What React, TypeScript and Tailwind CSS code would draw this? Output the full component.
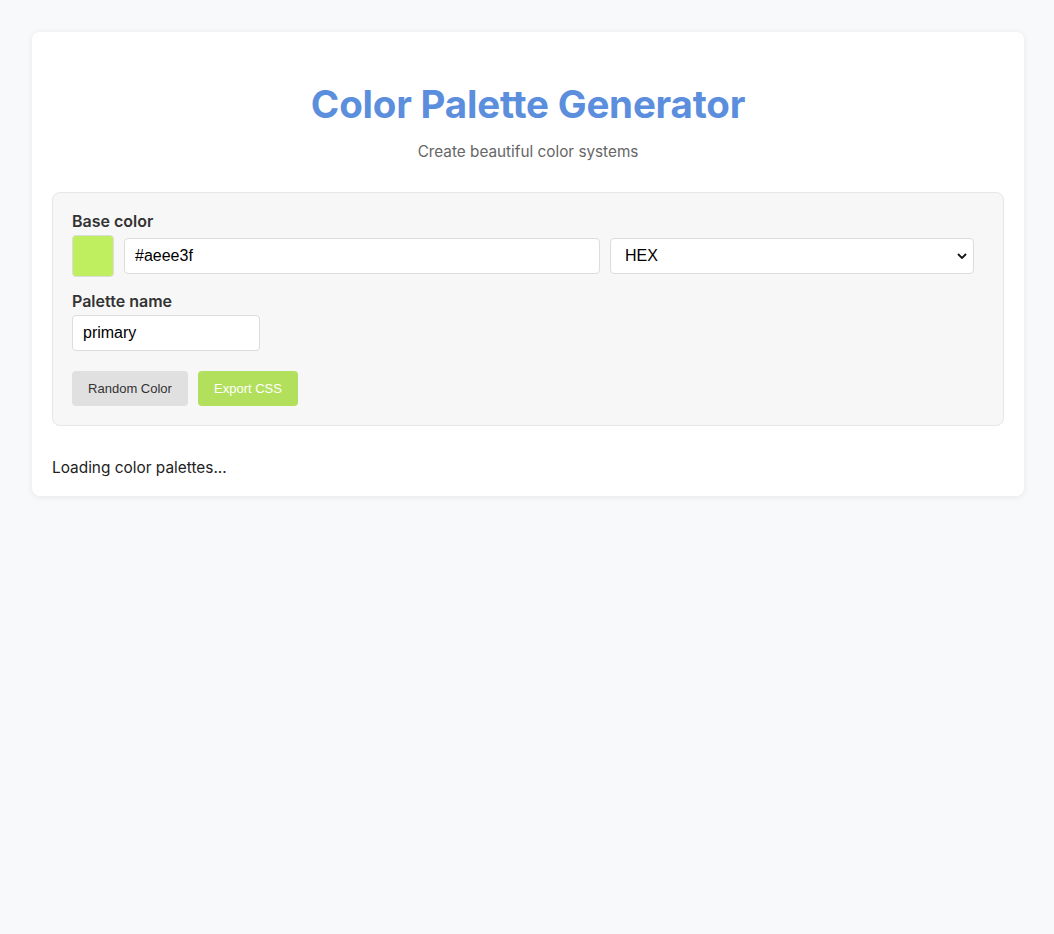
import React, { useState } from 'react';

const App: React.FC = () => {
    const [baseColor, setBaseColor] = useState('#aeee3f');
    const [format, setFormat] = useState('HEX');
    const [paletteName, setPaletteName] = useState('primary');

    return (
        <div className="min-h-[934px] bg-[#f8f9fa] pt-8 font-['Inter','Noto_Sans',sans-serif]">
            {/* Card */}
            <div className="ml-8 w-[992px] rounded-lg bg-white px-5 pb-4 shadow-[0_1px_6px_rgba(0,0,0,0.08)]">
                {/* Header */}
                <header className="pt-12 text-center">
                    <h1 className="text-[38.5px] font-bold leading-[48px] tracking-[-0.2px] text-[#5b8edc]">
                        Color Palette Generator
                    </h1>
                    <p className="mt-3 mb-[-1px] text-[15.3px] leading-6 text-[#666]">Create beautiful color systems</p>
                </header>

                {/* Controls */}
                <section className="mt-[29px] rounded-lg border border-[#e6e6e6] bg-[#f7f7f7] px-[19px] pt-[18px] pb-[19px]">
                    <label className="mb-1 block text-base font-semibold leading-5 text-[#333]">Base color</label>
                    <div className="flex items-center gap-[10px]">
                        <div
                            className="h-[42px] w-[42px] rounded border border-[#dcdcdc]"
                            style={{ backgroundColor: baseColor === '#aeee3f' ? '#bfee5f' : baseColor }}
                        />
                        <input
                            type="text"
                            value={baseColor}
                            onChange={(e) => setBaseColor(e.target.value)}
                            className="h-9 w-[476px] rounded border border-[#dcdcdc] bg-white px-[10px] font-['Liberation_Sans',Arial,sans-serif] text-base text-black outline-none"
                        />
                        <select
                            value={format}
                            onChange={(e) => setFormat(e.target.value)}
                            className="h-9 w-[364px] appearance-none rounded border border-[#dcdcdc] bg-white pl-[14px] pr-2 font-['Liberation_Sans',Arial,sans-serif] text-base text-black outline-none"
                            style={{
                                backgroundImage:
                                    "url(\"data:image/svg+xml,%3Csvg xmlns='http://www.w3.org/2000/svg' width='10' height='6' viewBox='0 0 10 6'%3E%3Cpath d='M1 1l4 4 4-4' fill='none' stroke='%23111' stroke-width='1.8'/%3E%3C/svg%3E\")",
                                backgroundRepeat: 'no-repeat',
                                backgroundPosition: 'right 6px center',
                            }}
                        >
                            <option>HEX</option>
                            <option>RGB</option>
                            <option>HSL</option>
                        </select>
                    </div>

                    <label className="mt-[14px] mb-1 block text-base font-semibold leading-5 text-[#333]">Palette name</label>
                    <input
                        type="text"
                        value={paletteName}
                        onChange={(e) => setPaletteName(e.target.value)}
                        className="h-9 w-[188px] rounded border border-[#dcdcdc] bg-white px-[10px] font-['Liberation_Sans',Arial,sans-serif] text-base text-black outline-none"
                    />

                    <div className="mt-5 flex gap-[10px]">
                        <button className="h-[35px] w-[116px] rounded bg-[#e0e0e0] font-['Liberation_Sans',Arial,sans-serif] text-[13px] text-[#333]">
                            Random Color
                        </button>
                        <button className="h-[35px] w-[100px] rounded bg-[#b2e05c] font-['Liberation_Sans',Arial,sans-serif] text-[13px] text-white">
                            Export CSS
                        </button>
                    </div>
                </section>

                <p className="mt-[30px] text-[15.4px] leading-6 text-[#222]">Loading color palettes...</p>
            </div>
        </div>
    );
};

export default App;
